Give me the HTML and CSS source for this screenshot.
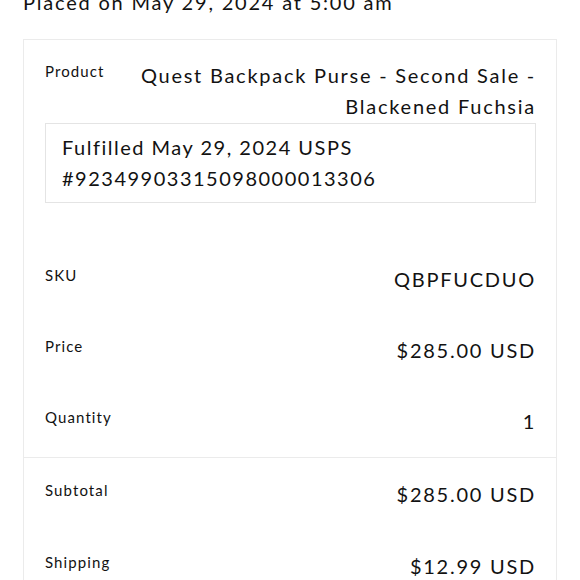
FILE: index.html
```html
<!DOCTYPE html>
<html>
<head>
<title>Order</title>
<link rel="stylesheet" href="styles.css">
</head>
<body>

<div id="order">
    <p class="placed">Placed on May 29, 2024 at 5:00 am</p>

    <div class="order-card">
        <div class="items">
            <div class="product">
                <div class="product-line">
                    <span class="label">Product</span>
                    <span class="value">Quest Backpack Purse - Second Sale - Blackened Fuchsia</span>
                </div>
                <div class="fulfillment">Fulfilled May 29, 2024 USPS #92349903315098000013306</div>
            </div>
            <div class="row">
                <span class="label">SKU</span>
                <span class="value">QBPFUCDUO</span>
            </div>
            <div class="row">
                <span class="label">Price</span>
                <span class="value">$285.00 USD</span>
            </div>
            <div class="row">
                <span class="label">Quantity</span>
                <span class="value">1</span>
            </div>
        </div>
        <div class="totals">
            <div class="row">
                <span class="label">Subtotal</span>
                <span class="value">$285.00 USD</span>
            </div>
            <div class="row">
                <span class="label">Shipping</span>
                <span class="value">$12.99 USD</span>
            </div>
        </div>
    </div>
</div>

</body>
</html>
```

FILE: styles.css
```css
/* Order details, mobile layout */
body {
    margin: 0;
    font-family: "Lato", sans-serif;
    color: #121212;
    background: #fff;
}

#order {
    padding: 0 23px;
}

.placed {
    margin: -13px 0 22px;
    font-size: 20px;
    line-height: 30px;
    letter-spacing: 1.8px;
}

.order-card {
    border: 1px solid #ebebeb;
}

.items {
    border-bottom: 1px solid #ebebeb;
}

.product {
    padding: 20px 20px 41px 21px;
}

.product-line,
.row {
    display: flex;
    justify-content: space-between;
    align-items: flex-start;
}

.row {
    padding: 20px 20px 20px 21px;
}

.totals .row {
    padding-top: 21px;
}

.label {
    flex-shrink: 0;
    font-size: 15px;
    line-height: 22px;
    letter-spacing: 1.1px;
}

.value {
    font-size: 20px;
    line-height: 31px;
    letter-spacing: 1.75px;
    text-align: right;
}

.product-line .value {
    padding-left: 30px;
}

.fulfillment {
    margin-top: 1px;
    padding: 8px 16px;
    border: 1px solid #e4e4e4;
    font-size: 20px;
    line-height: 31px;
    letter-spacing: 1.5px;
}
```
